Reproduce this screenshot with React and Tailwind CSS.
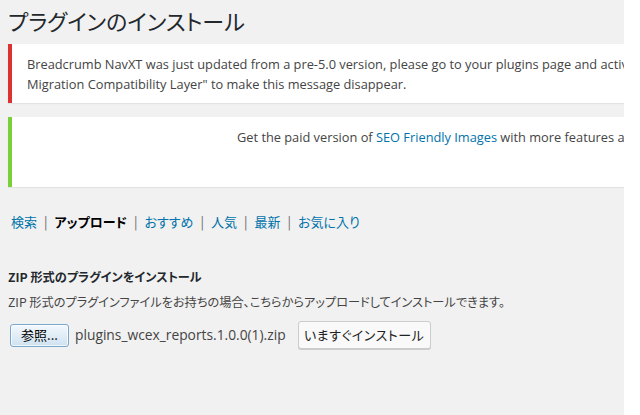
export default function App() {
  const cjk = { fontFamily: '"Noto Sans CJK JP", sans-serif' };
  return (
    <div className="min-h-[415px] w-[640px] bg-white">
      <div
        className="w-[624px] h-[415px] overflow-hidden bg-[#f1f1f1] text-[#444] text-[12.8px]"
        style={{ fontFamily: '"Open Sans", "Noto Sans CJK JP", sans-serif' }}
      >
        <h1
          className="pl-[8px] pt-[6px] h-[44px] text-[22px] leading-[29px] text-[#23282d] [font-feature-settings:'palt'] whitespace-nowrap"
          style={cjk}
        >
          プラグインのインストール
        </h1>

        <div className="ml-[8px] w-[640px] h-[59px] bg-white border-l-4 border-[#dc3232] shadow-[0_1px_1px_rgba(0,0,0,0.06)] pl-[15px] pt-[10px] leading-[20px] whitespace-nowrap">
          Breadcrumb NavXT was just updated from a pre-5.0 version, please go to your plugins page and activate "Breadcrumb NavXT
          <br />
          Migration Compatibility Layer" to make this message disappear.
        </div>

        <div className="mt-[14px] ml-[8px] w-[640px] h-[70px] bg-white border-l-4 border-[#7ad03a] shadow-[0_1px_1px_rgba(0,0,0,0.06)] pl-[225px] pt-[10px] leading-[20px] whitespace-nowrap">
          Get the paid version of <span className="text-[#0073aa]">SEO Friendly Images</span> with more features and options.
        </div>

        <div
          className="mt-[25px] pl-[11px] h-[20px] leading-[20px] text-[13px] [font-feature-settings:'palt'] whitespace-nowrap flex items-center"
          style={cjk}
        >
          <span className="text-[#0073aa]">検索</span>
          <span className="text-[#666] px-[7px]">|</span>
          <span className="text-black font-bold">アップロード</span>
          <span className="text-[#666] px-[7px]">|</span>
          <span className="text-[#0073aa]">おすすめ</span>
          <span className="text-[#666] px-[7px]">|</span>
          <span className="text-[#0073aa]">人気</span>
          <span className="text-[#666] px-[7px]">|</span>
          <span className="text-[#0073aa]">最新</span>
          <span className="text-[#666] px-[7px]">|</span>
          <span className="text-[#0073aa]">お気に入り</span>
        </div>

        <h3
          className="mt-[35px] pl-[8px] text-[12.2px] leading-[20px] font-bold text-[#23282d] [font-feature-settings:'palt'] whitespace-nowrap"
          style={cjk}
        >
          ZIP 形式のプラグインをインストール
        </h3>

        <p
          className="mt-[5px] pl-[8px] text-[12.2px] leading-[20px] text-[#444] [font-feature-settings:'palt'] whitespace-nowrap"
          style={cjk}
        >
          ZIP 形式のプラグインファイルをお持ちの場合、こちらからアップロードしてインストールできます。
        </p>

        <div className="mt-[9px] pl-[10px] flex items-center whitespace-nowrap">
          <button
            className="w-[59px] h-[23px] rounded-[3px] border border-[#7aa7cd] bg-gradient-to-b from-[#f3f8fc] to-[#cfe2f1] text-black text-[13px] leading-[20px] flex items-center justify-center shadow-[inset_0_0_0_1px_rgba(255,255,255,0.7)]"
            style={cjk}
          >
            参照...
          </button>
          <span className="ml-[6px] text-[13.8px] text-[#444]">plugins_wcex_reports.1.0.0(1).zip</span>
          <button
            className="ml-[12px] w-[133px] h-[28px] rounded-[3px] border border-[#cccccc] bg-[#f9f9f9] text-[#222] text-[13px] tracking-[0.5px] shadow-[0_1px_0_#ccc] flex items-center justify-center [font-feature-settings:'palt']"
            style={cjk}
          >
            いますぐインストール
          </button>
        </div>
      </div>
    </div>
  );
}
